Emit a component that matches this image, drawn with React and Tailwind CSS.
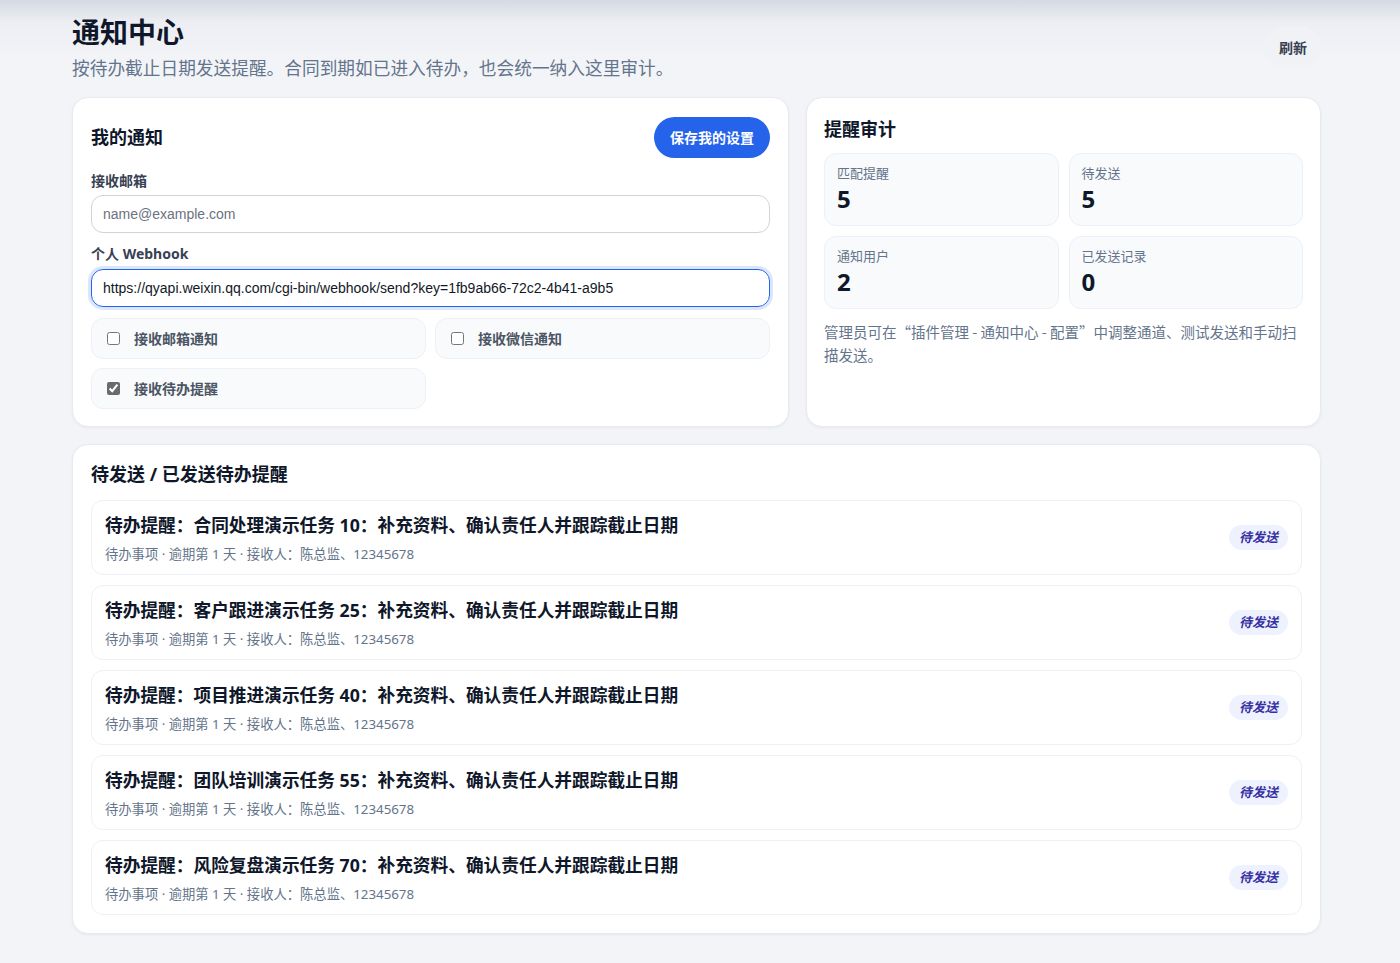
import { useState } from 'react';

const tareas = [
  '合同处理演示任务 10',
  '客户跟进演示任务 25',
  '项目推进演示任务 40',
  '团队培训演示任务 55',
  '风险复盘演示任务 70',
];

const stats = [
  { label: '匹配提醒', value: 5 },
  { label: '待发送', value: 5 },
  { label: '通知用户', value: 2 },
  { label: '已发送记录', value: 0 },
];

function CheckCard({ label, checked, onChange }) {
  return (
    <label className="flex items-center gap-[14px] h-[41px] px-[15px] rounded-xl border border-[#edf0f5] bg-[#f8fafc] cursor-pointer">
      <input
        type="checkbox"
        checked={checked}
        onChange={onChange}
        className="w-[13px] h-[13px] accent-[#6b6b6b]"
      />
      <span className="text-[14px] font-bold text-[#4b5563]">{label}</span>
    </label>
  );
}

export default function App() {
  const [email, setEmail] = useState('');
  const [webhook, setWebhook] = useState(
    'https://qyapi.weixin.qq.com/cgi-bin/webhook/send?key=1fb9ab66-72c2-4b41-a9b5'
  );
  const [opts, setOpts] = useState({ email: false, wechat: false, todo: true });

  return (
    <div
      className="min-h-screen bg-[linear-gradient(to_bottom,#d5d9e2_0px,#eceef3_22px,#f3f4f8_60px,#f3f4f8_100%)] text-[#111827]"
      style={{ fontFamily: '"Noto Sans", "Noto Sans CJK SC", sans-serif' }}>
      <div className="pl-[72px] w-[1321px] pt-[12px] pb-[29px]">
        {/* 头部 */}
        <div className="flex items-start justify-between">
          <div>
            <h1 className="text-[28px] leading-[40px] font-bold text-[#0f172a]">通知中心</h1>
            <p className="text-[17.7px] leading-[33px] text-[#64748b]">
              按待办截止日期发送提醒。合同到期如已进入待办，也会统一纳入这里审计。
            </p>
          </div>
          <button className="mt-[15px] h-[40px] px-[14px] rounded-full bg-[#f1f2f6] text-[14px] font-bold text-[#374151]">
            刷新
          </button>
        </div>

        <div className="grid grid-cols-[717px_1fr] gap-[17px] mt-[12px]">
          {/* 我的通知 */}
          <div className="bg-white rounded-2xl border border-[#e8eaf0] shadow-[0_1px_3px_rgba(15,23,42,0.05)] px-[18px] pt-[19px] pb-[17px]">
            <div className="flex items-center justify-between h-[41px]">
              <h2 className="text-[18px] font-bold text-[#0f172a]">我的通知</h2>
              <button className="h-[41px] px-[16px] rounded-full bg-[#2563eb] text-white text-[14px] font-bold">
                保存我的设置
              </button>
            </div>

            <div className="mt-[13px] text-[14px] leading-[20px] font-bold text-[#374151]">接收邮箱</div>
            <input
              value={email}
              onChange={(e) => setEmail(e.target.value)}
              placeholder="name@example.com"
              className="mt-[4px] w-full h-[38px] px-[11px] rounded-xl border border-[#cfd4dc] text-[14px] text-[#111827] placeholder:text-[#6b7280] outline-none"
              style={{ fontFamily: '"Liberation Sans", Arial, sans-serif' }}
            />

            <div className="mt-[11px] text-[14px] leading-[20px] font-bold text-[#374151]">个人 Webhook</div>
            <input
              value={webhook}
              onChange={(e) => setWebhook(e.target.value)}
              className="mt-[5px] w-full h-[38px] px-[11px] rounded-xl border border-[#2563eb] ring-[3px] ring-[#dbe6fd] text-[14px] text-[#111827] outline-none"
              style={{ fontFamily: '"Liberation Sans", Arial, sans-serif' }}
            />

            <div className="grid grid-cols-2 gap-[9px] mt-[11px]">
              <CheckCard
                label="接收邮箱通知"
                checked={opts.email}
                onChange={() => setOpts({ ...opts, email: !opts.email })}
              />
              <CheckCard
                label="接收微信通知"
                checked={opts.wechat}
                onChange={() => setOpts({ ...opts, wechat: !opts.wechat })}
              />
              <CheckCard
                label="接收待办提醒"
                checked={opts.todo}
                onChange={() => setOpts({ ...opts, todo: !opts.todo })}
              />
            </div>
          </div>

          {/* 提醒审计 */}
          <div className="bg-white rounded-2xl border border-[#e8eaf0] shadow-[0_1px_3px_rgba(15,23,42,0.05)] px-[17px] pt-[18px]">
            <h2 className="text-[18px] leading-[26px] font-bold text-[#0f172a]">提醒审计</h2>
            <div className="grid grid-cols-2 gap-[10px] mt-[11px]">
              {stats.map((s) => (
                <div
                  key={s.label}
                  className="h-[73px] rounded-xl border border-[#edf0f5] bg-[#f8fafc] px-[12px] pt-[10px]">
                  <div className="text-[13px] leading-[18px] text-[#64748b]">{s.label}</div>
                  <div className="text-[24px] leading-[33px] font-bold text-[#0f172a]">{s.value}</div>
                </div>
              ))}
            </div>
            <p
              className="mt-[11px] text-[14.5px] leading-[23px] text-[#64748b]"
              style={{ fontFamily: '"Noto Sans CJK SC", "Noto Sans", sans-serif' }}>
              管理员可在“插件管理 - 通知中心 - 配置”中调整通道、测试发送和手动扫描发送。
            </p>
          </div>
        </div>

        {/* 待办提醒列表 */}
        <div className="mt-[17px] bg-white rounded-2xl border border-[#e8eaf0] shadow-[0_1px_3px_rgba(15,23,42,0.05)] px-[18px] pt-[16px] pb-[18px]">
          <h2 className="text-[18px] leading-[26px] font-bold text-[#0f172a]">待发送 / 已发送待办提醒</h2>
          <div className="mt-[13px] flex flex-col gap-[10px]">
            {tareas.map((t) => (
              <div
                key={t}
                className="flex items-center justify-between h-[75px] rounded-xl border border-[#edf0f5] bg-white pl-[13px] pr-[13px]">
                <div>
                  <div className="text-[17.7px] leading-[26px] font-bold text-[#0f172a]">
                    待办提醒：{t}：补充资料、确认责任人并跟踪截止日期
                  </div>
                  <div className="mt-[6px] text-[13.3px] leading-[20px] text-[#64748b]">
                    待办事项 · 逾期第 1 天 · 接收人：陈总监、12345678
                  </div>
                </div>
                <span className="h-[25px] px-[10px] flex items-center rounded-full bg-[#eef2ff] text-[13px] font-bold italic text-[#3730a3]">
                  待发送
                </span>
              </div>
            ))}
          </div>
        </div>
      </div>
    </div>
  );
}
